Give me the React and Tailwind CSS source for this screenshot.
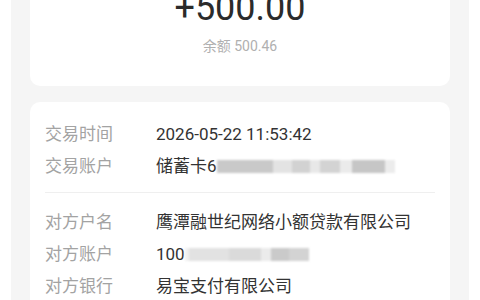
import React from 'react';

const font = { fontFamily: 'Roboto, "Noto Sans CJK SC", sans-serif' };

// blurred stand-in for masked account digits
function Masked({ blocks }) {
  return (
    <div className="flex h-[13px] items-stretch blur-[1px]">
      {blocks.map(([w, c], i) => (
        <div key={i} style={{ width: w, backgroundColor: c }} />
      ))}
    </div>
  );
}

function Row({ label, children }) {
  return (
    <div className="flex h-8 items-center text-[17px] leading-none">
      <span className="w-[111px] shrink-0 text-[#a3a3a3]">{label}</span>
      <div className="flex items-center text-[#333333]">{children}</div>
    </div>
  );
}

export default function App() {
  return (
    <div className="min-h-[300px] bg-white px-[11px] overflow-hidden" style={font}>
      <div className="flex flex-col bg-[#f5f5f5] px-[19px] pb-6 min-h-[300px]">
        {/* amount card */}
        <div className="-mt-[10px] flex flex-col items-center rounded-[10px] bg-white pb-[30px]">
          <div className="h-9 text-[36px] leading-9 text-[#2b2b2b]">+500.00</div>
          <div className="mt-[10px] h-5 text-[14px] leading-5 text-[#b0b0b0]">余额 500.46</div>
        </div>

        {/* details card */}
        <div className="mt-4 rounded-[10px] bg-white px-[15px]">
          <div className="border-b border-[#efefef] pt-4 pb-[10px]">
            <Row label="交易时间">2026-05-22 11:53:42</Row>
            <Row label="交易账户">
              <span>储蓄卡6</span>
              <Masked
                blocks={[
                  [56, '#c9c9c9'],
                  [19, '#e3e3e3'],
                  [18, '#d2d2d2'],
                  [10, '#e8e8e8'],
                  [20, '#d3d3d3'],
                  [12, '#ebebeb'],
                  [33, '#c6c6c6'],
                  [10, '#ececec'],
                ]}
              />
            </Row>
          </div>
          <div className="pt-[13px] pb-4">
            <Row label="对方户名">鹰潭融世纪网络小额贷款有限公司</Row>
            <Row label="对方账户">
              <span>100</span>
              <Masked
                blocks={[
                  [4, '#f0f0f0'],
                  [40, '#e2e2e2'],
                  [32, '#dadada'],
                  [10, '#ebebeb'],
                  [18, '#cacaca'],
                  [20, '#d3d3d3'],
                ]}
              />
            </Row>
            <Row label="对方银行">易宝支付有限公司</Row>
          </div>
        </div>
      </div>
    </div>
  );
}
